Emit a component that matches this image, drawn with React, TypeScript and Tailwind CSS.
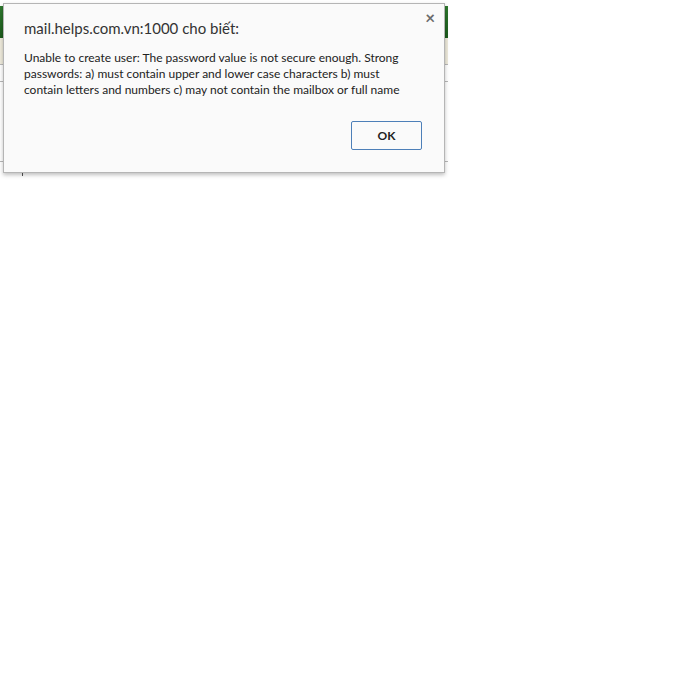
import React from "react";

const UI_FONT = "font-['Segoe_UI','Lato','Liberation_Sans',sans-serif]";

function BackgroundPage() {
  return (
    <div className="w-[448px]">
      <div className="h-[6px] bg-white" />
      <div className="h-[32px] bg-gradient-to-b from-[#2f7a2f] to-[#1b5a1b]" />
      <div className="h-[26px] bg-[#eeeadb]" />
      <div className="h-[17px] border-t border-[#b8b8b8]" />
      <div className="h-[80px] border-t border-[#b8b8b8]" />
      <div className="border-t border-[#b8b8b8] pl-[22px]">
        <div className="h-[14px] w-px bg-[#555]" />
      </div>
    </div>
  );
}

function AlertDialog() {
  return (
    <div
      className={`absolute left-[3px] top-[3px] w-[442px] h-[170px] bg-[#fafafa] border border-[#b5b5b5] shadow-[0_2px_4px_rgba(0,0,0,0.25)] ${UI_FONT}`}
    >
      <button className="absolute right-[9px] top-[5px] text-[17px] leading-none font-bold text-[#6b6b6b]">
        ×
      </button>
      <div className="pl-[20px] pr-[20px] pt-[14px]">
        <div className="text-[15px] leading-[20px] text-[#333]">mail.helps.com.vn:1000 cho biết:</div>
        <div className="mt-[12px] text-[12px] leading-[16px] text-[#222] whitespace-nowrap">
          Unable to create user: The password value is not secure enough. Strong
          <br />
          passwords: a) must contain upper and lower case characters b) must
          <br />
          contain letters and numbers c) may not contain the mailbox or full name
        </div>
      </div>
      <div className="flex justify-end pr-[22px] pt-[23px]">
        <button className="w-[71px] h-[29px] rounded-[2px] border border-[#4d7fb8] bg-[#fafafa] text-[12px] font-bold text-[#222]">
          OK
        </button>
      </div>
    </div>
  );
}

export default function App() {
  return (
    <div className="relative w-[692px] h-[693px] bg-white overflow-hidden">
      <BackgroundPage />
      <AlertDialog />
    </div>
  );
}
